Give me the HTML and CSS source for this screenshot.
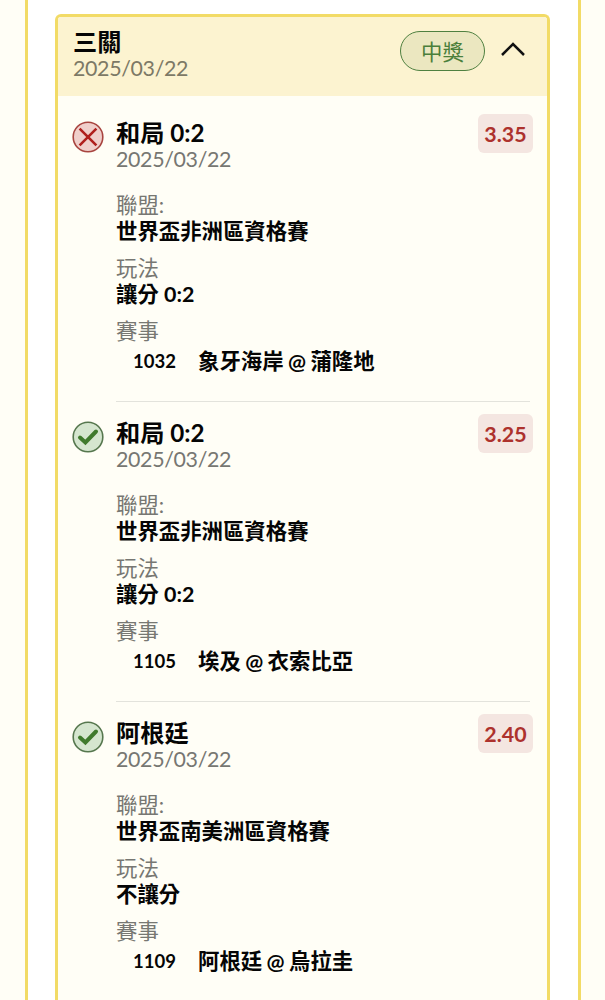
FILE: index.html
```
<!DOCTYPE html>
<html lang="zh-Hant">
<head>
  <meta charset="UTF-8" />
  <meta name="viewport" content="width=device-width, initial-scale=1.0"/>
  <title>三關</title>
  <link rel="stylesheet" href="styles.css">
</head>
<body>
<div class="panel">
  <div class="ticket">
    <div class="ticket-header">
      <div class="ticket-title">
        <h2>三關</h2>
        <div class="date">2025/03/22</div>
      </div>
      <span class="status">中獎</span>
      <svg class="chevron" viewBox="0 0 26 16"><path d="M2 14 L13 3 L24 14"/></svg>
    </div>

    <!-- Bet 1 -->
    <div class="bet">
      <svg class="icon lose" viewBox="0 0 32 32">
        <circle cx="16" cy="16" r="14.8"/>
        <path d="M7.6 7.6 L24.4 24.4 M24.4 7.6 L7.6 24.4"/>
      </svg>
      <div class="bet-body">
        <div class="bet-top">
          <div>
            <h3>和局 0:2</h3>
            <div class="date">2025/03/22</div>
          </div>
          <span class="odds">3.35</span>
        </div>
        <dl>
          <dt>聯盟:</dt>
          <dd>世界盃非洲區資格賽</dd>
          <dt>玩法</dt>
          <dd>讓分 0:2</dd>
          <dt>賽事</dt>
        </dl>
        <div class="match"><span class="match-no">1032</span><span class="teams">象牙海岸 @ 蒲隆地</span></div>
      </div>
    </div>

    <!-- Bet 2 -->
    <div class="bet">
      <svg class="icon win" viewBox="0 0 32 32">
        <circle cx="16" cy="16" r="14.8"/>
        <path d="M8 16.5 L13.4 21.4 L24 10.5"/>
      </svg>
      <div class="bet-body">
        <div class="bet-top">
          <div>
            <h3>和局 0:2</h3>
            <div class="date">2025/03/22</div>
          </div>
          <span class="odds">3.25</span>
        </div>
        <dl>
          <dt>聯盟:</dt>
          <dd>世界盃非洲區資格賽</dd>
          <dt>玩法</dt>
          <dd>讓分 0:2</dd>
          <dt>賽事</dt>
        </dl>
        <div class="match"><span class="match-no">1105</span><span class="teams">埃及 @ 衣索比亞</span></div>
      </div>
    </div>

    <!-- Bet 3 -->
    <div class="bet">
      <svg class="icon win" viewBox="0 0 32 32">
        <circle cx="16" cy="16" r="14.8"/>
        <path d="M8 16.5 L13.4 21.4 L24 10.5"/>
      </svg>
      <div class="bet-body">
        <div class="bet-top">
          <div>
            <h3>阿根廷</h3>
            <div class="date">2025/03/22</div>
          </div>
          <span class="odds">2.40</span>
        </div>
        <dl>
          <dt>聯盟:</dt>
          <dd>世界盃南美洲區資格賽</dd>
          <dt>玩法</dt>
          <dd>不讓分</dd>
          <dt>賽事</dt>
        </dl>
        <div class="match"><span class="match-no">1109</span><span class="teams">阿根廷 @ 烏拉圭</span></div>
      </div>
    </div>
  </div>
</div>
</body>
</html>
```
FILE: styles.css
```
/* Reset */
* {
  margin: 0;
  padding: 0;
  box-sizing: border-box;
}

body {
  background: #fffef6;
  font-family: Lato, "Noto Sans CJK TC", sans-serif;
  font-size: 21.4px;
  line-height: 26px;
  color: #050505;
}

.panel {
  width: 556px;
  height: 1000px;
  margin-left: 25px;
  padding: 14px 28px 0 27px;
  background: #fff;
  border: solid #f2db66;
  border-width: 0 3px;
}

.ticket {
  height: 986px;
  border: 3px solid #f2db66;
  border-bottom: none;
  border-radius: 6px 6px 0 0;
  background: #fffef6;
}

.ticket-header {
  display: flex;
  align-items: flex-start;
  height: 79px;
  padding: 12px 21px 0 15px;
  background: #fcf3d0;
  border-radius: 3px 3px 0 0;
}

.ticket-title {
  flex: 1;
}

h2,
h3 {
  font-size: 24.2px;
  font-weight: 700;
  line-height: 26px;
}

.date {
  letter-spacing: -0.35px;
  color: #777772;
}

.ticket-header .date {
  color: #7d7966;
}

.status {
  width: 85px;
  height: 40px;
  margin-top: 2px;
  border: 1.5px solid #4f8040;
  border-radius: 20px;
  background: #ebe7c0;
  color: #4b7f3b;
  line-height: 40px;
  text-align: center;
}

.chevron {
  width: 26px;
  height: 16px;
  margin: 12px 0 0 15px;
  fill: none;
  stroke: #111;
  stroke-width: 2.5;
}

.bet {
  display: flex;
  gap: 12px;
  height: 300px;
  padding: 17px 14px 0 14px;
}

.icon {
  flex: none;
  width: 32px;
  height: 32px;
  margin-top: 8px;
}

.icon path {
  fill: none;
}

.lose circle {
  fill: #f0cfcb;
  stroke: #a8443f;
  stroke-width: 1.6;
}

.lose path {
  stroke: #b01f1d;
  stroke-width: 2.6;
}

.win circle {
  fill: #d5e6cf;
  stroke: #56774e;
  stroke-width: 1.6;
}

.win path {
  stroke: #3f7a2c;
  stroke-width: 4;
  stroke-linecap: round;
}

.bet-body {
  flex: 1;
}

.bet-top {
  display: flex;
  justify-content: space-between;
}

.bet-top h3 {
  margin-top: 7px;
}

.odds {
  width: 55px;
  height: 39px;
  margin-top: 1px;
  border-radius: 6px;
  background: #f4e6e1;
  color: #ad322d;
  font-weight: 700;
  line-height: 40px;
  text-align: center;
}

dl {
  margin-top: 20px;
}

dt {
  color: #777772;
}

dd {
  margin-bottom: 11px;
  font-weight: 700;
}

.match {
  display: flex;
  height: 58px;
  margin-right: 3px;
  padding: 4px 0 0 17px;
  border-bottom: 1.5px solid #e3e3dc;
  font-weight: 700;
}

.match-no {
  width: 65px;
  font-size: 18.5px;
}

.teams {
  word-spacing: -0.8px;
}

.bet:last-child .match {
  border-bottom: none;
}
```
